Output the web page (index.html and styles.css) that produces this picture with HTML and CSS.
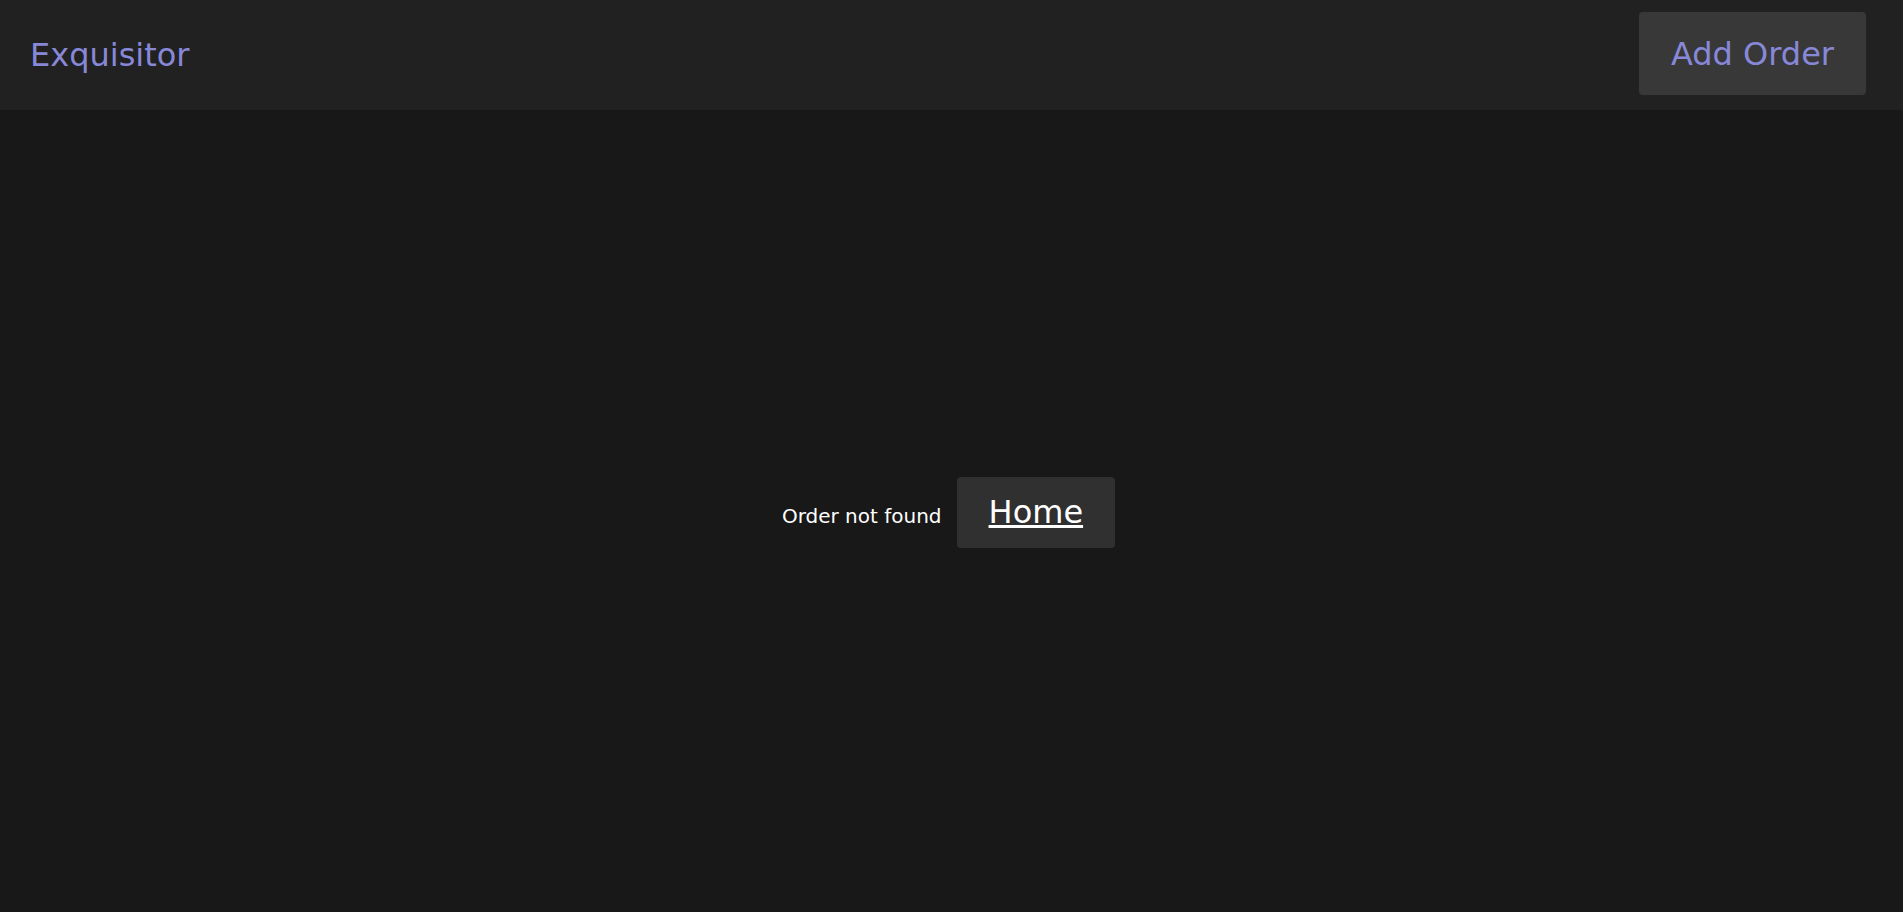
FILE: index.html
```html
<!DOCTYPE html>
<html lang="en">
<head>
<meta charset="utf-8">
<title>Exquisitor</title>
<link rel="stylesheet" href="styles.css">
</head>
<body>
<div class="app">
  <header class="topbar">
    <a class="brand" href="#">Exquisitor</a>
    <button class="add-btn" type="button">Add Order</button>
  </header>
  <main class="content">
    <div class="notfound">
      <span class="msg">Order not found</span>
      <a class="home-btn" href="#">Home</a>
    </div>
  </main>
</div>
</body>
</html>
```
FILE: styles.css
```css
* { box-sizing: border-box; }
html, body { margin: 0; height: 100%; }
body {
  background: #181818;
  font-family: "DejaVu Sans", sans-serif;
  color: #ffffff;
}
.app {
  display: flex;
  flex-direction: column;
  height: 100vh;
}
.topbar {
  height: 110px;
  flex: 0 0 110px;
  background: #212121;
  display: flex;
  align-items: center;
  justify-content: space-between;
  padding: 0 37px 0 30px;
}
.brand {
  color: #8888d8;
  font-size: 32px;
  text-decoration: none;
}
.add-btn {
  background: #383838;
  color: #8888d8;
  font-family: "DejaVu Sans", sans-serif;
  font-size: 32px;
  border: none;
  border-radius: 4px;
  height: 83px;
  padding: 0 32px;
  margin-top: -3px;
}
.content {
  flex: 1;
  display: flex;
  align-items: center;
  justify-content: center;
}
.notfound {
  display: flex;
  align-items: center;
  gap: 15px;
  margin-left: -6px;
  margin-top: 3px;
}
.msg {
  font-size: 20px;
  margin-top: 6px;
}
.home-btn {
  display: inline-block;
  background: #303030;
  color: #ffffff;
  font-size: 32px;
  padding: 16px 32px 17px;
  border-radius: 4px;
  text-decoration: underline;
}
```
